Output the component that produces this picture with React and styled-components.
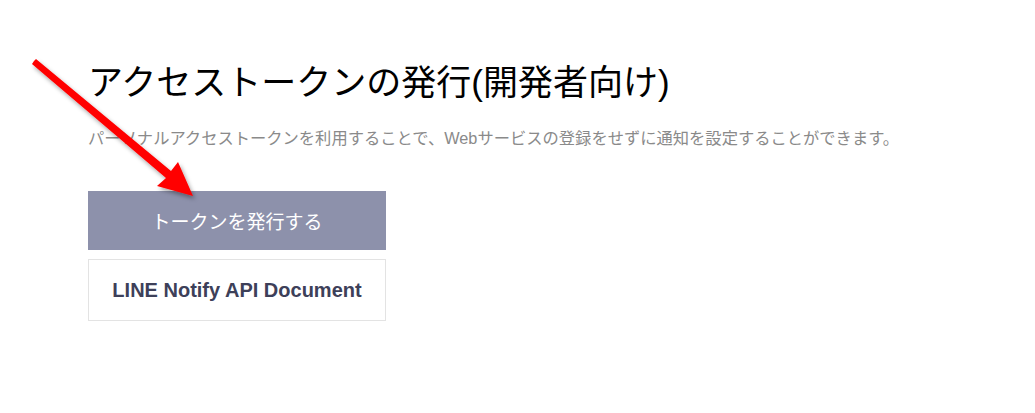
import styled, { createGlobalStyle } from 'styled-components'

const GlobalStyle = createGlobalStyle`
    html, body {
        margin: 0;
        padding: 0;
        background: #fff;
    }
    body {
        font-family: "Liberation Sans", "Noto Sans CJK JP", sans-serif;
    }
`

function App() {
    return (
        <Page>
            <GlobalStyle />
            <Section>
                <Title>アクセストークンの発行(開発者向け)</Title>
                <Lead>パーソナルアクセストークンを利用することで、Webサービスの登録をせずに通知を設定することができます。</Lead>
                <Buttons>
                    <PrimaryButton>トークンを発行する</PrimaryButton>
                    <SecondaryButton>LINE Notify API Document</SecondaryButton>
                </Buttons>
            </Section>
            <Arrow viewBox="0 0 1035 413" aria-hidden="true">
                <defs>
                    <filter id="shadow" x="-20%" y="-20%" width="140%" height="140%">
                        <feDropShadow dx="2" dy="3" stdDeviation="2" floodColor="#000" floodOpacity="0.35" />
                    </filter>
                </defs>
                <path
                    d="M34 61 L36 59 L171 171 L178 162 L193 196 L157 186 L166 178 L32 64 Z"
                    fill="#ff0000"
                    filter="url(#shadow)"
                />
            </Arrow>
        </Page>
    )
}

export default App

const Page = styled.div`
    position: relative;
    width: 1035px;
    height: 413px;
    overflow: hidden;
`

const Section = styled.div`
    padding: 60px 0 0 88px;
`

const Title = styled.h1`
    margin: 0;
    font-family: "Liberation Sans", "Noto Sans CJK JP", sans-serif;
    font-weight: 400;
    font-size: 35px;
    line-height: 46px;
    color: #000;
`

const Lead = styled.p`
    margin: 20px 0 0;
    font-size: 16.3px;
    line-height: 24px;
    color: #8a8a8a;
`

const Buttons = styled.div`
    display: flex;
    flex-direction: column;
    gap: 9px;
    width: 298px;
    margin-top: 41px;
`

const PrimaryButton = styled.div`
    height: 59px;
    display: flex;
    justify-content: center;
    align-items: center;
    background: #8d91ab;
    color: #fff;
    font-size: 19px;
    cursor: pointer;
`

const SecondaryButton = styled.div`
    height: 60px;
    display: flex;
    justify-content: center;
    align-items: center;
    background: #fff;
    border: 1px solid #e3e3e3;
    color: #3d4059;
    font-size: 20px;
    font-weight: 700;
    cursor: pointer;
`

const Arrow = styled.svg`
    position: absolute;
    left: 0;
    top: 0;
    width: 1035px;
    height: 413px;
    pointer-events: none;
`
